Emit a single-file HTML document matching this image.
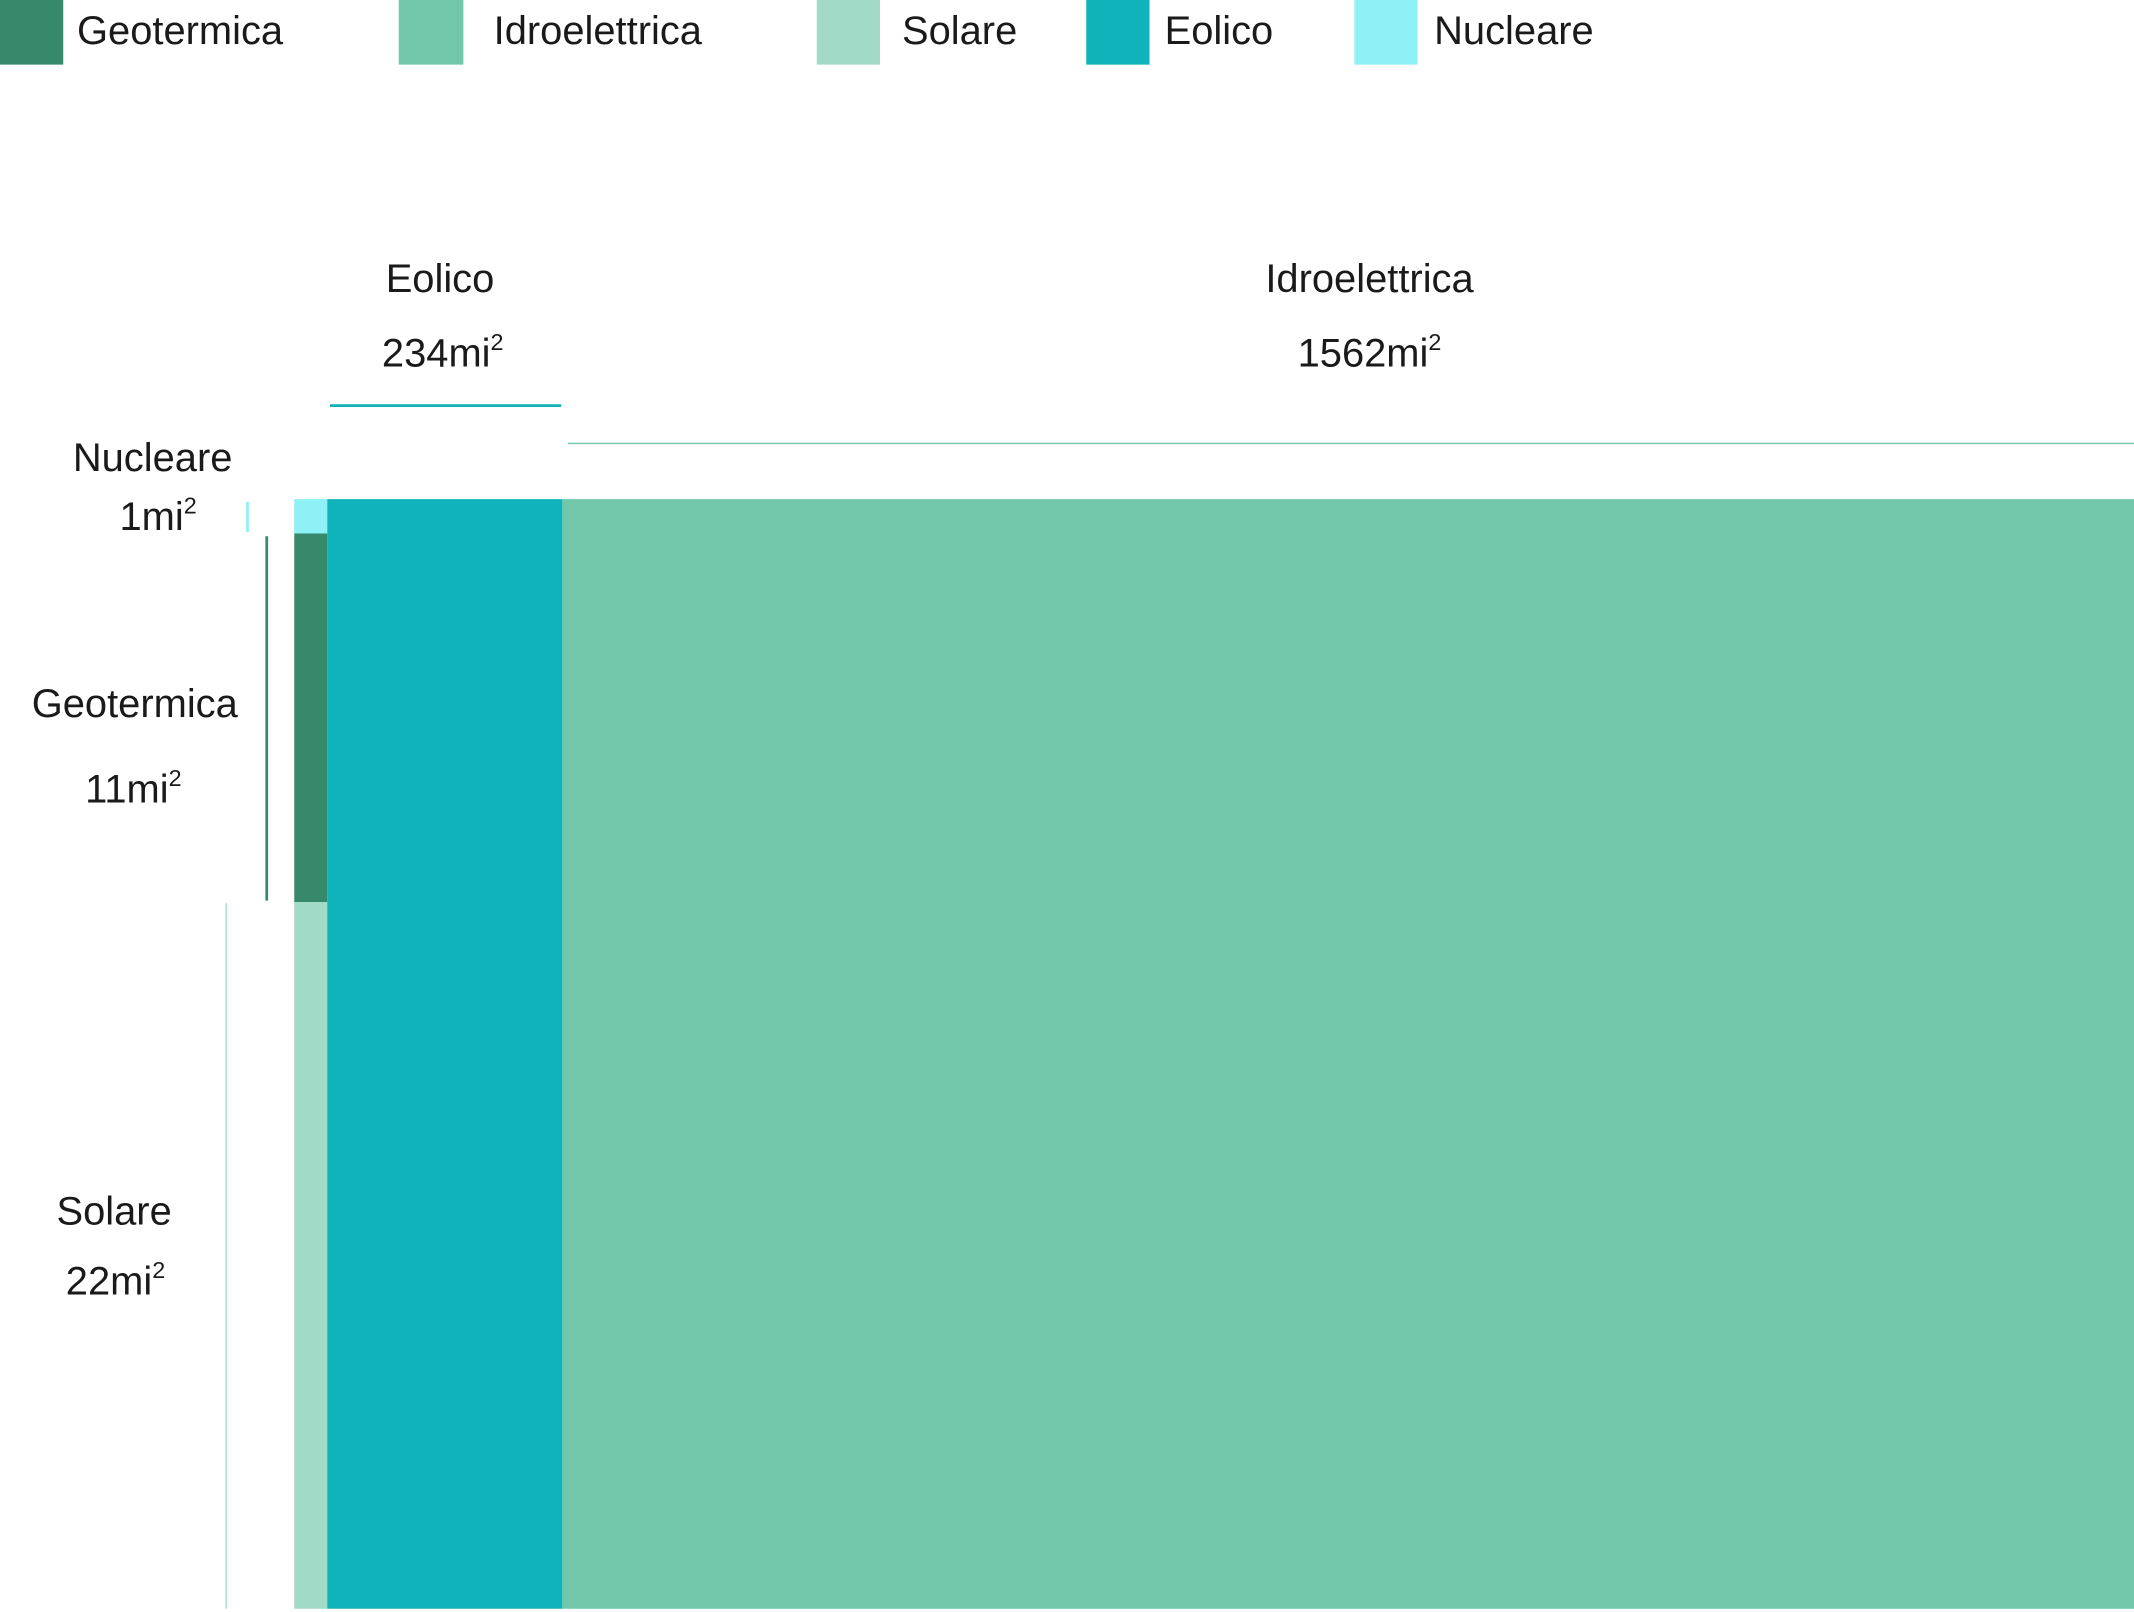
<!DOCTYPE html>
<html><head><meta charset="utf-8"><style>
html,body{margin:0;padding:0;background:#fff;width:2134px;height:1612px;overflow:hidden}
#w{position:absolute;left:0;top:0;width:1552px;height:1172px;transform:scale(1.375);transform-origin:0 0;font-family:"Liberation Sans",sans-serif;color:#1a1a1a}
.a{position:absolute}
.t{position:absolute;font-size:29px;transform:translate(-50%,-50%);white-space:nowrap;line-height:1}
.l{position:absolute;font-size:29px;line-height:1;top:9px;white-space:nowrap}
sup{font-size:17px;vertical-align:top;position:relative;top:-3px}
</style></head><body><div id="w">
<div class="a" style="left:0;top:0;width:46px;height:47px;background:#37896b"></div>
<div class="a" style="left:290px;top:0;width:47px;height:47px;background:#72c6a9"></div>
<div class="a" style="left:594px;top:0;width:46px;height:47px;background:#a2dac8"></div>
<div class="a" style="left:790px;top:0;width:46px;height:47px;background:#0fb3ba"></div>
<div class="a" style="left:985px;top:0;width:46px;height:47px;background:#8ef1f6"></div>
<div class="l" style="left:56px">Geotermica</div>
<div class="l" style="left:359px">Idroelettrica</div>
<div class="l" style="left:656px">Solare</div>
<div class="l" style="left:847px">Eolico</div>
<div class="l" style="left:1043px">Nucleare</div>

<div class="a" style="left:214px;top:363px;width:24px;height:25px;background:#8ef1f6"></div>
<div class="a" style="left:214px;top:388px;width:24px;height:268px;background:#37896b"></div>
<div class="a" style="left:214px;top:656px;width:24px;height:514px;background:#a2dac8"></div>
<div class="a" style="left:238px;top:363px;width:171px;height:807px;background:#0fb3ba"></div>
<div class="a" style="left:409px;top:363px;width:1143px;height:807px;background:#72c6a9"></div>

<div class="a" style="left:240px;top:294px;width:168px;height:2px;background:#0fb3ba"></div>
<div class="a" style="left:413px;top:322px;width:1139px;height:1px;background:#72c6a9"></div>
<div class="a" style="left:179px;top:365px;width:2px;height:22px;background:#8ef1f6"></div>
<div class="a" style="left:193px;top:390px;width:2px;height:265px;background:#37896b"></div>
<div class="a" style="left:164px;top:657px;width:1px;height:513px;background:#a2dac8"></div>

<div class="t" style="left:320px;top:204px">Eolico</div>
<div class="t" style="left:322px;top:258px">234mi<sup>2</sup></div>
<div class="t" style="left:996px;top:204px">Idroelettrica</div>
<div class="t" style="left:996px;top:258px">1562mi<sup>2</sup></div>
<div class="t" style="left:111px;top:334px">Nucleare</div>
<div class="t" style="left:115px;top:377px">1mi<sup>2</sup></div>
<div class="t" style="left:98px;top:513px">Geotermica</div>
<div class="t" style="left:97px;top:575px">11mi<sup>2</sup></div>
<div class="t" style="left:83px;top:882px">Solare</div>
<div class="t" style="left:84px;top:933px">22mi<sup>2</sup></div>
</div></body></html>
